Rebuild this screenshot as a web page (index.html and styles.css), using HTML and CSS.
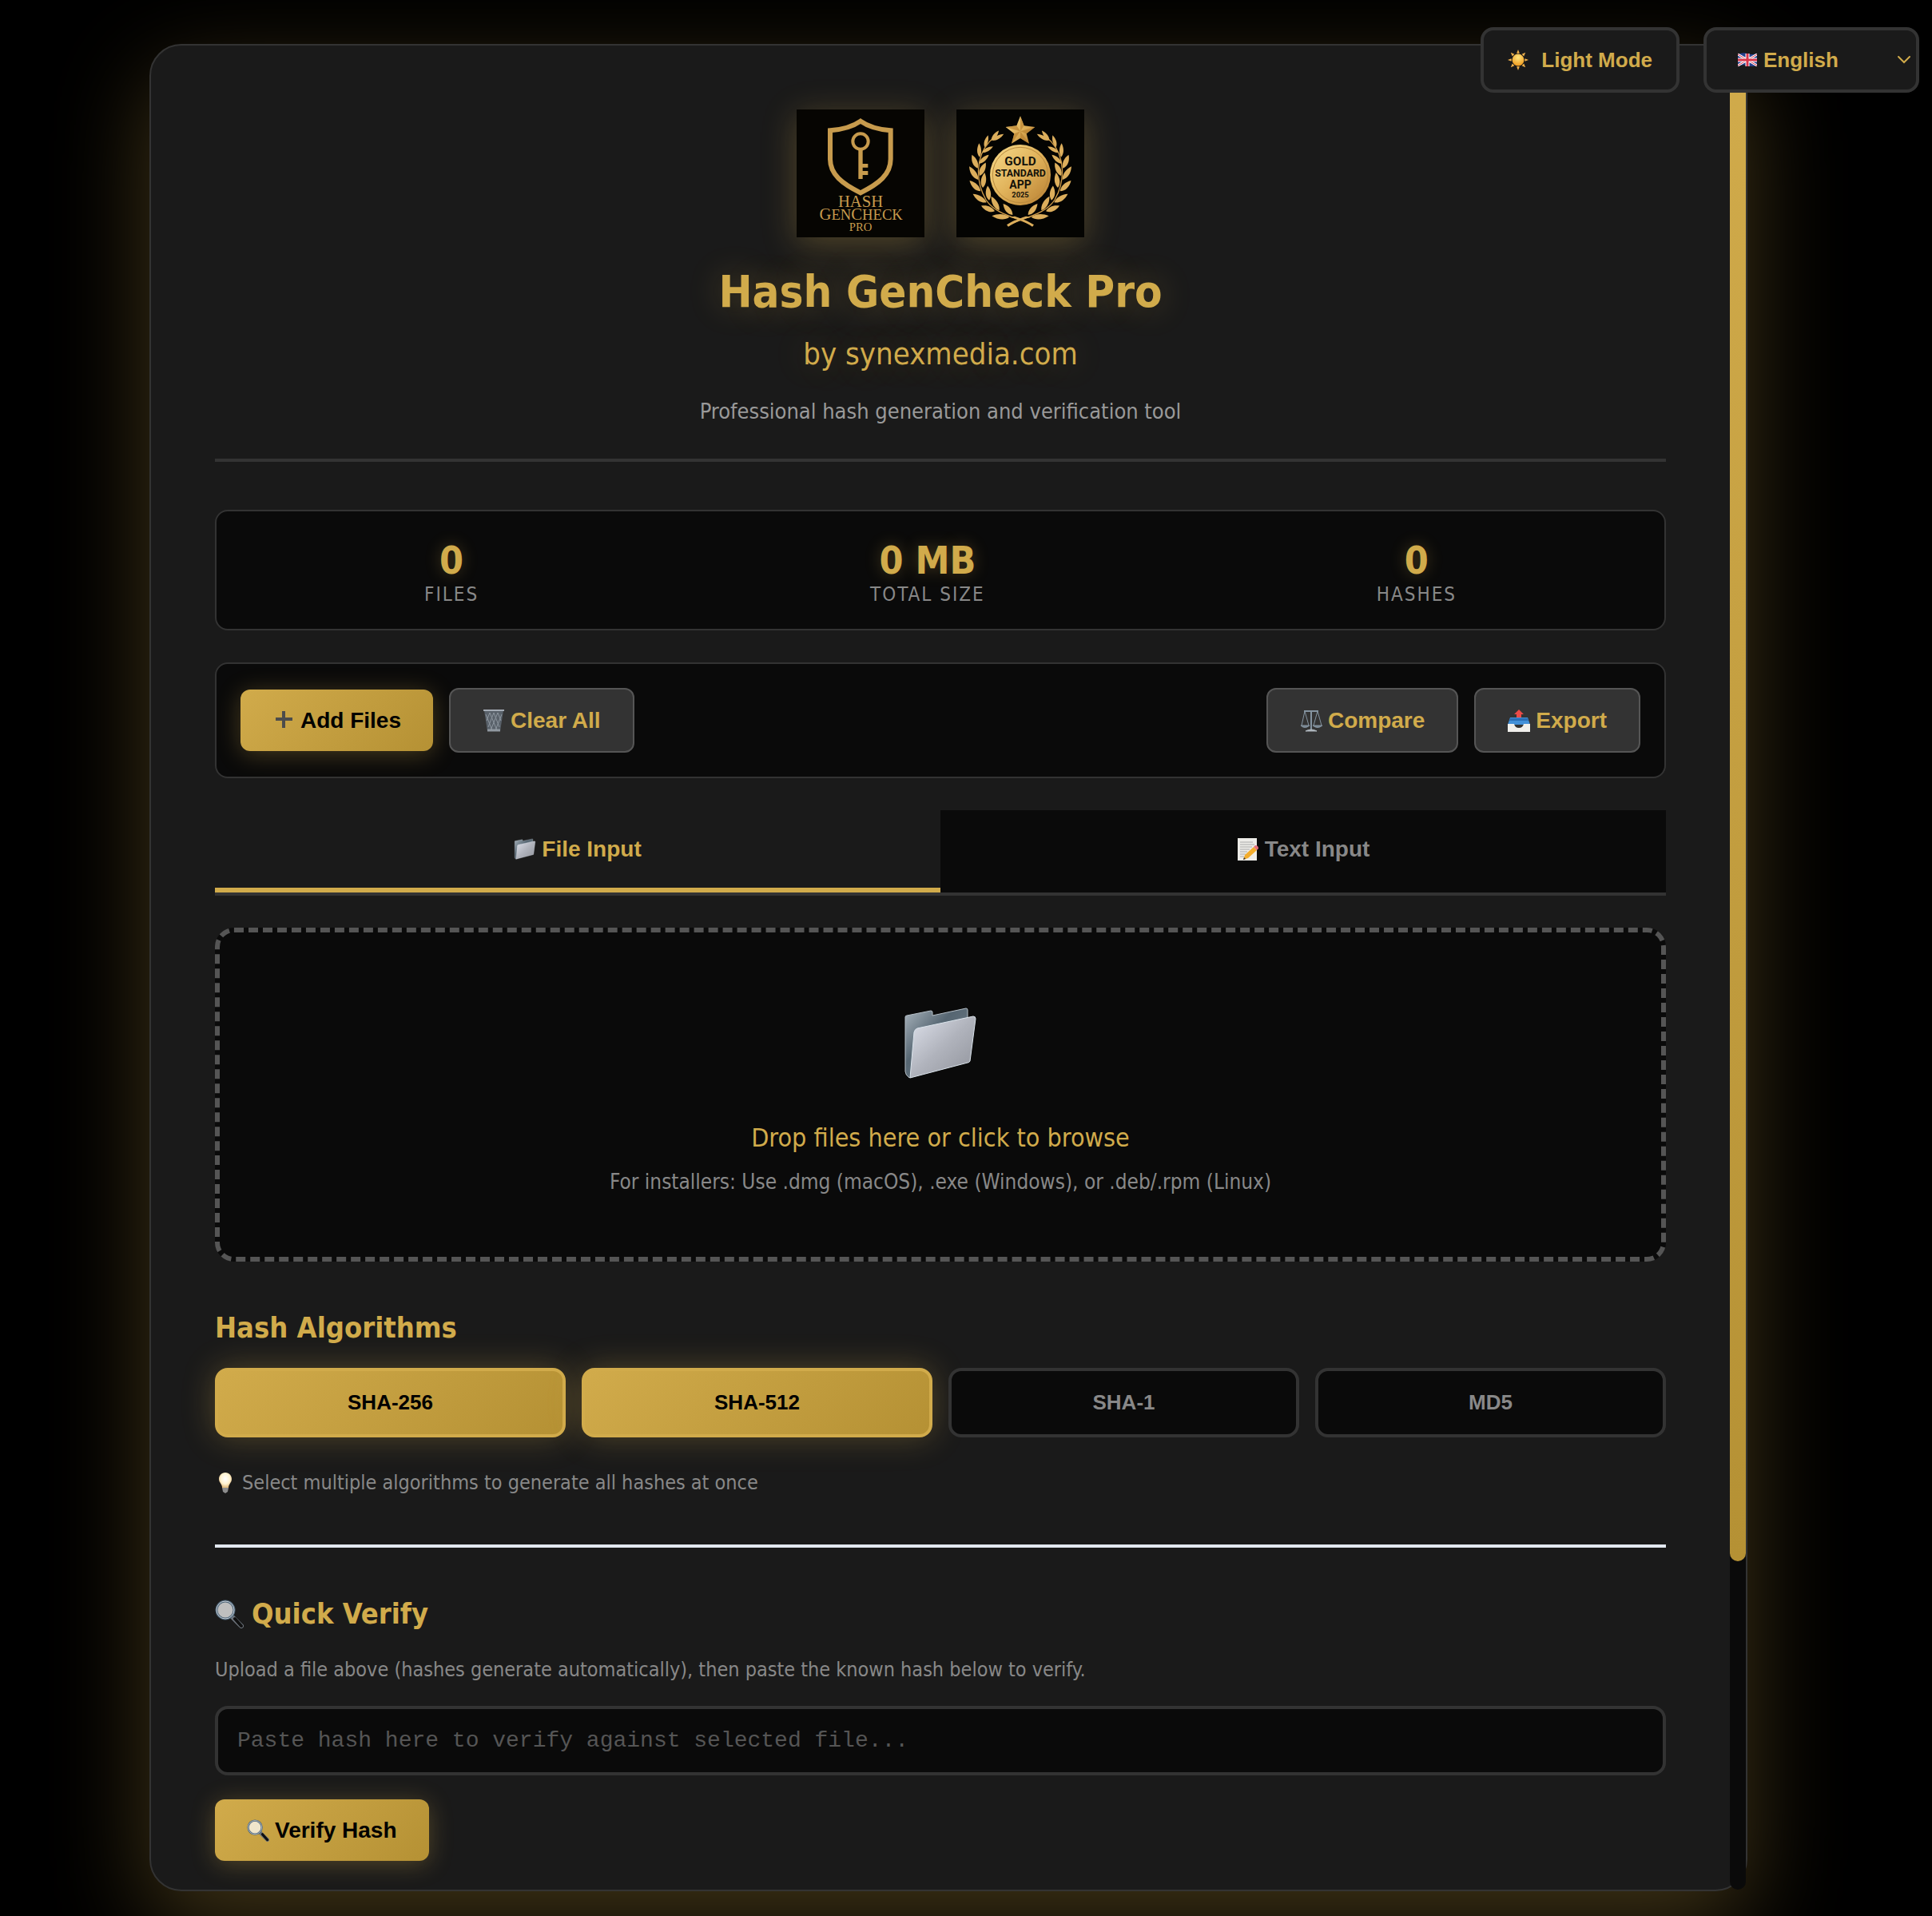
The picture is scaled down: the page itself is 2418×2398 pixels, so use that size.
FILE: index.html
```
<!DOCTYPE html>
<html lang="en">
<head>
  <meta charset="UTF-8">
  <meta name="viewport" content="width=device-width, initial-scale=1.0">
  <title>Hash GenCheck Pro</title>
  <link rel="stylesheet" href="styles.css">
</head>
<body>
  <!-- Shared icons and gradients -->
  <svg class="defs" width="0" height="0" aria-hidden="true">
    <defs>
      <linearGradient id="silver" x1="0" y1="0" x2="1" y2="1">
        <stop offset="0" stop-color="#dfe2ec"/>
        <stop offset="0.5" stop-color="#b0b3bc"/>
        <stop offset="1" stop-color="#8f929a"/>
      </linearGradient>
      <linearGradient id="folderBack" x1="0" y1="0" x2="1" y2="1">
        <stop offset="0" stop-color="#a9b4bd"/>
        <stop offset="0.4" stop-color="#566672"/>
        <stop offset="1" stop-color="#75828c"/>
      </linearGradient>
      <linearGradient id="goldLight" x1="0" y1="0" x2="1" y2="1">
        <stop offset="0" stop-color="#f8dc8c"/>
        <stop offset="0.5" stop-color="#e0b25a"/>
        <stop offset="1" stop-color="#b67d30"/>
      </linearGradient>
      <radialGradient id="sunFill" cx="0.5" cy="0.3" r="0.7">
        <stop offset="0" stop-color="#ffe680"/>
        <stop offset="1" stop-color="#f09a1c"/>
      </radialGradient>
      <radialGradient id="bulbFill" cx="0.5" cy="0.4" r="0.6">
        <stop offset="0" stop-color="#ffffff"/>
        <stop offset="0.6" stop-color="#fff3d0"/>
        <stop offset="1" stop-color="#e0b878"/>
      </radialGradient>
      <symbol id="icon-folder" viewBox="0 0 96 96">
        <path d="M4 14 Q4 12 6 12 L36 6 Q38 6 38 8 L38 12 L80 3 Q82 3 82 5 L82 16 L20 84 L9 90 Q4 86 4 82 Z" fill="url(#folderBack)" stroke="#b4bec6" stroke-width="1"/>
        <path d="M19 28 L89 13 Q92 13 92 16 L85 69 Q84 71 82 71 L10 90 L15 33 Q16 29 19 28 Z" fill="url(#silver)" stroke="#dbe4ec" stroke-width="1"/>
      </symbol>
      <symbol id="icon-search" viewBox="0 0 36 36">
        <path d="M22 22 L33 33" stroke="#6d747c" stroke-width="6" stroke-linecap="round"/>
        <path d="M25 24 L33 33" stroke="#101010" stroke-width="4" stroke-linecap="round"/>
        <circle cx="13" cy="13" r="11" fill="#fff" fill-opacity="0.72" stroke="#4d6477" stroke-width="3"/>
        <circle cx="13" cy="13" r="11" fill="none" stroke="#c6ced6" stroke-width="1"/>
      </symbol>
      <path id="leaf" d="M0 0 C-14 -14 -13 -36 0 -55 C12 -36 12 -14 0 0 Z"/>
      <path id="ray" d="M14 0 L16 5 L12 5 Z"/>
      <g id="branch">
        <path d="M938 488 C890 458 800 450 762 390 C722 320 722 230 775 172 L800 150" fill="none" stroke="#cf9b48" stroke-width="4"/>
        <path d="M942 484 L936 491 C900 468 880 462 850 455 L870 452 C900 462 920 470 942 484 Z"/>
        <use href="#leaf" transform="translate(850 455) rotate(-86) scale(1 1.2)"/>
        <use href="#leaf" transform="translate(795 433) rotate(-68)"/>
        <use href="#leaf" transform="translate(764 400) rotate(-58) scale(1 1.1)"/>
        <use href="#leaf" transform="translate(742 358) rotate(-46) scale(1 1.05)"/>
        <use href="#leaf" transform="translate(733 315) rotate(-34) scale(1 1.1)"/>
        <use href="#leaf" transform="translate(731 272) rotate(-23)"/>
        <use href="#leaf" transform="translate(738 230) rotate(-2) scale(0.8 0.95)"/>
        <use href="#leaf" transform="translate(757 193) rotate(16) scale(0.7 0.85)"/>
        <use href="#leaf" transform="translate(782 168) rotate(37) scale(0.7 0.85)"/>
        <use href="#leaf" transform="translate(862 447) rotate(-40)"/>
        <use href="#leaf" transform="translate(812 430) rotate(-30) scale(1 1.1)"/>
        <use href="#leaf" transform="translate(774 392) rotate(-6)"/>
        <use href="#leaf" transform="translate(750 345) rotate(7) scale(1 1.05)"/>
        <use href="#leaf" transform="translate(738 300) rotate(25)"/>
        <use href="#leaf" transform="translate(736 254) rotate(48) scale(0.8 0.9)"/>
        <use href="#leaf" transform="translate(748 213) rotate(60) scale(0.7 0.85)"/>
        <use href="#leaf" transform="translate(786 168) rotate(60) scale(0.7 0.9)"/>
      </g>
    </defs>
  </svg>

  <div class="top-controls">
    <button type="button" class="theme-toggle">
      <svg class="icon icon-sun" viewBox="0 0 28 28" aria-hidden="true">
        <g fill="#f0b04c">
          <use href="#ray"/>
          <use href="#ray" transform="rotate(45 14 14)"/>
          <use href="#ray" transform="rotate(90 14 14)"/>
          <use href="#ray" transform="rotate(135 14 14)"/>
          <use href="#ray" transform="rotate(180 14 14)"/>
          <use href="#ray" transform="rotate(225 14 14)"/>
          <use href="#ray" transform="rotate(270 14 14)"/>
          <use href="#ray" transform="rotate(315 14 14)"/>
        </g>
        <circle cx="14" cy="14" r="8" fill="url(#sunFill)"/>
      </svg>
      Light Mode
    </button>
    <div class="language">
      <svg class="flag" viewBox="0 0 24 20" aria-hidden="true">
        <path d="M0 3 Q6 0 12 2 T24 2 V17 Q18 19 12 17 T0 18 Z" fill="#24408e"/>
        <path d="M0 3 L24 17 M0 17 L24 3" stroke="#fff" stroke-width="3"/>
        <path d="M0 3 L24 17 M0 17 L24 3" stroke="#d8344a" stroke-width="1"/>
        <path d="M12 2 V18 M0 10 H24" stroke="#fff" stroke-width="5"/>
        <path d="M12 2 V18 M0 10 H24" stroke="#d8344a" stroke-width="3"/>
      </svg>
      <select class="language-select" aria-label="Language">
        <option>English</option>
      </select>
      <svg class="chevron" viewBox="0 0 20 12" aria-hidden="true">
        <path d="M3 2 L10 9 L17 2" fill="none" stroke="#d1ab4b" stroke-width="2" stroke-linecap="round"/>
      </svg>
    </div>
  </div>

  <div class="container">
    <main class="content">
      <header class="header">
        <div class="logos">
          <svg class="logo" viewBox="51 51 480 480" role="img" aria-label="Hash GenCheck Pro logo">
            <rect x="51" y="51" width="480" height="480" fill="#060502"/>
            <path d="M291 95 C325 119 365 127 404 130 V238 C404 295 360 330 291 364 C222 330 177 295 177 238 V130 C217 127 257 119 291 95 Z" fill="none" stroke="#c79b4d" stroke-width="18"/>
            <circle cx="291" cy="171" r="29" fill="none" stroke="#c79b4d" stroke-width="12"/>
            <path d="M283 204 H299 V255 H319 V269 H299 V282 H319 V297 H299 V312 H283 Z" fill="#c79b4d"/>
            <g class="logo-text">
              <text x="291" y="416" font-size="62">HASH</text>
              <text x="293" y="465" font-size="56"><tspan font-size="62">G</tspan>EN<tspan font-size="62">C</tspan>HECK</text>
              <text x="291" y="506" font-size="44">PRO</text>
            </g>
          </svg>
          <svg class="logo" viewBox="651 51 480 480" role="img" aria-label="Gold Standard App 2025">
            <rect x="651" y="51" width="480" height="480" fill="#040402"/>
            <g fill="#dcae5c">
              <use href="#branch"/>
              <use href="#branch" transform="translate(1782 0) scale(-1 1)"/>
            </g>
            <path d="M891 76 L905 112 L946 117 L914 142 L924 179 L891 159 L858 179 L868 142 L836 117 L877 112 Z" fill="url(#goldLight)"/>
            <path d="M891 76 L905 112 L891 133 Z M946 117 L914 142 L891 133 Z M924 179 L891 159 L891 133 Z M858 179 L868 142 L891 133 Z M836 117 L877 112 L891 133 Z" fill="#b47c2c" fill-opacity="0.6"/>
            <circle cx="891" cy="297" r="114" fill="url(#goldLight)"/>
            <circle cx="891" cy="297" r="104" fill="none" stroke="#b98a3e" stroke-width="3"/>
            <g class="badge-text">
              <text x="891" y="261" font-size="46">GOLD</text>
              <text x="891" y="303" font-size="37">STANDARD</text>
              <text x="891" y="347" font-size="42">APP</text>
              <text x="891" y="380" font-size="28">2025</text>
            </g>
          </svg>
        </div>
        <h1>Hash GenCheck Pro</h1>
        <p class="byline">by synexmedia.com</p>
        <p class="tagline">Professional hash generation and verification tool</p>
      </header>

      <div class="stats">
        <div class="stat">
          <div class="stat-value">0</div>
          <div class="stat-label">Files</div>
        </div>
        <div class="stat">
          <div class="stat-value">0 MB</div>
          <div class="stat-label">Total Size</div>
        </div>
        <div class="stat">
          <div class="stat-value">0</div>
          <div class="stat-label">Hashes</div>
        </div>
      </div>

      <div class="toolbar">
        <div class="toolbar-group">
          <button type="button" class="btn btn-primary">
            <svg class="icon" viewBox="0 0 28 28" aria-hidden="true">
              <path d="M14 2 V23 M4 12 H25" stroke="#4c4c4c" stroke-width="4"/>
            </svg>
            Add Files
          </button>
          <button type="button" class="btn btn-secondary">
            <svg class="icon" viewBox="0 0 28 28" aria-hidden="true">
              <path d="M2 1 L26 1 L22 27 L6 27 Z" fill="#59616a"/>
              <path d="M4 6 L12 26 M9 4 L18 26 M14 4 L21 22 M19 4 L23 14 M24 6 L16 26 M19 4 L10 26 M14 4 L7 22 M9 4 L5 14" stroke="#8c959e" stroke-width="1"/>
              <path d="M1 1 H27" stroke="#a3abb4" stroke-width="2"/>
              <path d="M6 26 H22" stroke="#9098a0" stroke-width="3"/>
            </svg>
            Clear All
          </button>
        </div>
        <div class="toolbar-group">
          <button type="button" class="btn btn-secondary">
            <svg class="icon" viewBox="0 0 28 28" aria-hidden="true" fill="none" stroke="#8493a0">
              <path d="M5 2 H23" stroke-width="2"/>
              <path d="M14 1 V26" stroke-width="2"/>
              <path d="M6 2 L2 20 M6 2 L11 20 M22 2 L17 20 M22 2 L27 20" stroke-width="1"/>
              <path d="M1 20 H12 Q6 25 1 20 Z M16 20 H28 Q22 25 16 20 Z" fill="#7b8893"/>
              <path d="M7 27 Q14 23 21 27 Z" fill="#b0b8bf" stroke="#b0b8bf"/>
            </svg>
            Compare
          </button>
          <button type="button" class="btn btn-secondary">
            <svg class="icon" viewBox="0 0 28 28" aria-hidden="true">
              <path d="M3 10 H25 L28 19 H0 Z" fill="#4290d8"/>
              <path d="M3 11 H25 L26 14 H2 Z" fill="#2a6fb5"/>
              <path d="M0 18 H8 Q9 23 14 23 Q19 23 20 18 H28 V28 H0 Z" fill="#f0efeb"/>
              <path d="M14 0 L20 6 H17 V10 H11 V6 H8 Z" fill="#ea4b48"/>
            </svg>
            Export
          </button>
        </div>
      </div>

      <div class="tabs">
        <button type="button" class="tab active">
          <svg class="icon" aria-hidden="true"><use href="#icon-folder"/></svg>
          File Input
        </button>
        <button type="button" class="tab">
          <svg class="icon" viewBox="0 0 28 28" aria-hidden="true">
            <rect x="1" y="0" width="24" height="28" fill="#edece8"/>
            <path d="M4 5 H20 M4 8 H22 M4 11 H19 M4 14 H16 M4 17 H13 M4 20 H11 M4 23 H9" stroke="#a8a8a8" stroke-width="1"/>
            <path d="M8 27 L10 21 L21 11 L25 15 L14 25 Z" fill="#f2ac2c"/>
            <path d="M21 11 L23 9 Q27 9 27 13 L25 15 Z" fill="#e5707c"/>
            <path d="M8 27 L9 24 L11 26 Z" fill="#333"/>
          </svg>
          Text Input
        </button>
      </div>

      <div class="drop-zone">
        <div class="drop-icon">
          <svg width="96" height="96" aria-hidden="true"><use href="#icon-folder"/></svg>
        </div>
        <p class="drop-text">Drop files here or click to browse</p>
        <p class="drop-note">For installers: Use .dmg (macOS), .exe (Windows), or .deb/.rpm (Linux)</p>
      </div>

      <section class="algorithms">
        <h2>Hash Algorithms</h2>
        <div class="algo-grid">
          <button type="button" class="algo selected">SHA-256</button>
          <button type="button" class="algo selected">SHA-512</button>
          <button type="button" class="algo">SHA-1</button>
          <button type="button" class="algo">MD5</button>
        </div>
        <p class="note hint">
          <svg class="icon-bulb" viewBox="0 0 26 26" aria-hidden="true">
            <path d="M13 0 C18 0 21 4 21 8 C21 13 17 14 17 19 H9 C9 14 5 13 5 8 C5 4 8 0 13 0 Z" fill="url(#bulbFill)"/>
            <path d="M9 19 H17 L16 24 L13 26 L10 24 Z" fill="#8d8d8d"/>
          </svg>
          Select multiple algorithms to generate all hashes at once
        </p>
      </section>

      <section class="verify">
        <h2>
          <svg class="icon-heading" aria-hidden="true"><use href="#icon-search"/></svg>
          Quick Verify
        </h2>
        <p class="note"><label for="knownHash">Upload a file above (hashes generate automatically), then paste the known hash below to verify.</label></p>
        <input type="text" id="knownHash" class="hash-input" placeholder="Paste hash here to verify against selected file...">
        <button type="button" class="btn btn-primary">
          <svg class="icon" aria-hidden="true"><use href="#icon-search"/></svg>
          Verify Hash
        </button>
      </section>
    </main>
    <div class="scroll-track">
      <div class="scroll-thumb"></div>
    </div>
  </div>
</body>
</html>
```

FILE: styles.css
```
:root {
  --gold: #d1ab4b;
  --gold-dark: #b59134;
  --panel: #1a1a1a;
  --well: #0a0a0a;
  --line: #333;
  --muted: #888;
}

* {
  box-sizing: border-box;
  margin: 0;
  padding: 0;
}

body {
  height: 100vh;
  padding: 55px 44px 31px 0;
  background: #000;
  color: var(--gold);
  font-family: "DejaVu Sans Condensed", Tahoma, "DejaVu Sans", sans-serif;
  overflow: hidden;
}

button,
select {
  font-family: "Liberation Sans", Arial, sans-serif;
  font-weight: bold;
  cursor: pointer;
}

.defs {
  position: absolute;
}

.icon {
  width: 28px;
  height: 28px;
  flex: none;
}

/* Top controls */
.top-controls {
  position: fixed;
  top: 34px;
  right: 16px;
  z-index: 10;
  display: flex;
  gap: 30px;
}

.theme-toggle,
.language-select {
  height: 82px;
  border: 4px solid var(--line);
  border-radius: 16px;
  background: var(--panel);
  color: var(--gold);
  font-size: 26px;
}

.theme-toggle {
  display: flex;
  align-items: center;
  gap: 16px;
  padding: 0 30px;
}

.icon-sun {
  width: 26px;
  height: 26px;
}

.language {
  position: relative;
}

.language-select {
  width: 270px;
  padding-left: 71px;
  appearance: none;
}

.flag {
  position: absolute;
  left: 43px;
  top: 31px;
  width: 24px;
  height: 20px;
  pointer-events: none;
}

.chevron {
  position: absolute;
  right: 9px;
  top: 35px;
  width: 20px;
  height: 12px;
  pointer-events: none;
}

/* Main panel */
.container {
  display: flex;
  max-width: 2000px;
  height: 100%;
  margin: 0 auto;
  border: 2px solid var(--line);
  border-radius: 40px;
  background: var(--panel);
  box-shadow: 0 40px 120px rgba(212, 172, 75, 0.3);
}

.content {
  flex: 1;
  min-width: 0;
  padding: 80px;
  overflow-y: auto;
  scrollbar-width: none;
}

.scroll-track {
  width: 20px;
  border-radius: 10px;
  background: var(--well);
}

.scroll-thumb {
  height: 82.2%;
  border-radius: 10px;
  background: linear-gradient(180deg, var(--gold), var(--gold-dark));
}

/* Header */
.header {
  padding-bottom: 42px;
  border-bottom: 4px solid var(--line);
  margin-bottom: 60px;
  text-align: center;
}

.logos {
  display: flex;
  justify-content: center;
  gap: 40px;
  margin-bottom: 34px;
}

.logo {
  width: 160px;
  height: 160px;
  box-shadow: 0 8px 40px rgba(212, 172, 75, 0.3);
}

.logo-text {
  fill: #c79b4d;
  font-family: "Liberation Serif", serif;
  text-anchor: middle;
}

.badge-text {
  fill: #14120a;
  font-family: Roboto, sans-serif;
  font-weight: bold;
  text-anchor: middle;
}

h1 {
  margin-bottom: 20px;
  font-size: 56px;
  line-height: 68px;
  text-shadow: 0 0 40px rgba(212, 172, 75, 0.3);
}

.byline {
  margin-bottom: 30px;
  font-size: 38px;
  line-height: 49px;
  text-shadow: 0 0 40px rgba(212, 172, 75, 0.3);
}

.tagline {
  color: #999;
  font-size: 27px;
  line-height: 34px;
}

/* Stats */
.stats {
  display: flex;
  justify-content: space-around;
  gap: 30px;
  padding: 32px 30px 28px;
  border: 2px solid var(--line);
  border-radius: 16px;
  margin-bottom: 40px;
  background: var(--well);
  text-align: center;
}

.stat-value {
  font-size: 48px;
  font-weight: bold;
  line-height: 58px;
  text-shadow: 0 0 20px rgba(212, 172, 75, 0.3);
}

.stat-label {
  color: var(--muted);
  font-size: 24px;
  line-height: 29px;
  letter-spacing: 2px;
  text-transform: uppercase;
}

/* Toolbar */
.toolbar {
  display: flex;
  justify-content: space-between;
  padding: 30px;
  border: 2px solid var(--line);
  border-radius: 16px;
  margin-bottom: 40px;
  background: var(--well);
}

.toolbar-group {
  display: flex;
  align-items: center;
  gap: 20px;
}

.btn {
  display: flex;
  align-items: center;
  gap: 7px;
  padding: 22px 40px;
  border: none;
  border-radius: 12px;
  font-size: 28px;
  line-height: 33px;
}

.btn-primary {
  background: linear-gradient(135deg, var(--gold), var(--gold-dark));
  box-shadow: 0 4px 30px rgba(212, 172, 75, 0.3);
  color: #000;
}

.btn-secondary {
  border: 2px solid #555;
  background: var(--line);
  color: var(--gold);
}

/* Tabs */
.tabs {
  display: flex;
  border-bottom: 4px solid var(--line);
  margin-bottom: 40px;
}

.tab {
  flex: 1;
  display: flex;
  align-items: center;
  justify-content: center;
  gap: 7px;
  padding: 32px;
  border: none;
  border-bottom: 6px solid transparent;
  background: var(--well);
  color: var(--muted);
  font-size: 28px;
  line-height: 33px;
}

.tab.active {
  border-bottom-color: var(--gold);
  background: var(--panel);
  color: var(--gold);
}

/* Drop zone */
.drop-zone {
  padding: 82px 80px 78px;
  border: 6px dashed #555;
  border-radius: 24px;
  margin-bottom: 60px;
  background: var(--well);
  text-align: center;
}

.drop-icon {
  display: flex;
  align-items: center;
  justify-content: center;
  height: 116px;
  margin-bottom: 40px;
}

.drop-text {
  margin-bottom: 20px;
  font-size: 32px;
  line-height: 39px;
}

.drop-note {
  color: var(--muted);
  font-size: 26px;
  line-height: 31px;
}

.note {
  color: var(--muted);
  font-size: 25px;
  line-height: 31px;
}

/* Algorithms */
h2 {
  display: flex;
  align-items: center;
  gap: 10px;
  margin-bottom: 28px;
  font-size: 36px;
  line-height: 45px;
}

.icon-heading {
  width: 36px;
  height: 36px;
}

.algo-grid {
  display: grid;
  grid-template-columns: repeat(4, 1fr);
  gap: 20px;
  margin-bottom: 40px;
}

.algo {
  padding: 24px;
  border: 4px solid var(--line);
  border-radius: 16px;
  background: var(--well);
  color: var(--muted);
  font-size: 26px;
  line-height: 31px;
}

.algo.selected {
  border-color: var(--gold);
  background: linear-gradient(135deg, var(--gold), var(--gold-dark));
  box-shadow: 0 0 40px rgba(212, 172, 75, 0.3);
  color: #000;
}

.hint {
  display: flex;
  align-items: center;
  gap: 8px;
  line-height: 34px;
}

.icon-bulb {
  width: 26px;
  height: 26px;
}

/* Quick verify */
.verify {
  padding-top: 60px;
  border-top: 4px solid #e2e8f0;
  margin-top: 60px;
}

.verify h2 {
  margin-bottom: 32px;
}

.hash-input {
  display: block;
  width: 100%;
  height: 87px;
  padding: 0 24px;
  border: 4px solid var(--line);
  border-radius: 16px;
  margin: 30px 0;
  background: var(--well);
  color: var(--gold);
  font-family: "Liberation Mono", "Courier New", monospace;
  font-size: 28px;
}

.hash-input::placeholder {
  color: #555;
}
```
